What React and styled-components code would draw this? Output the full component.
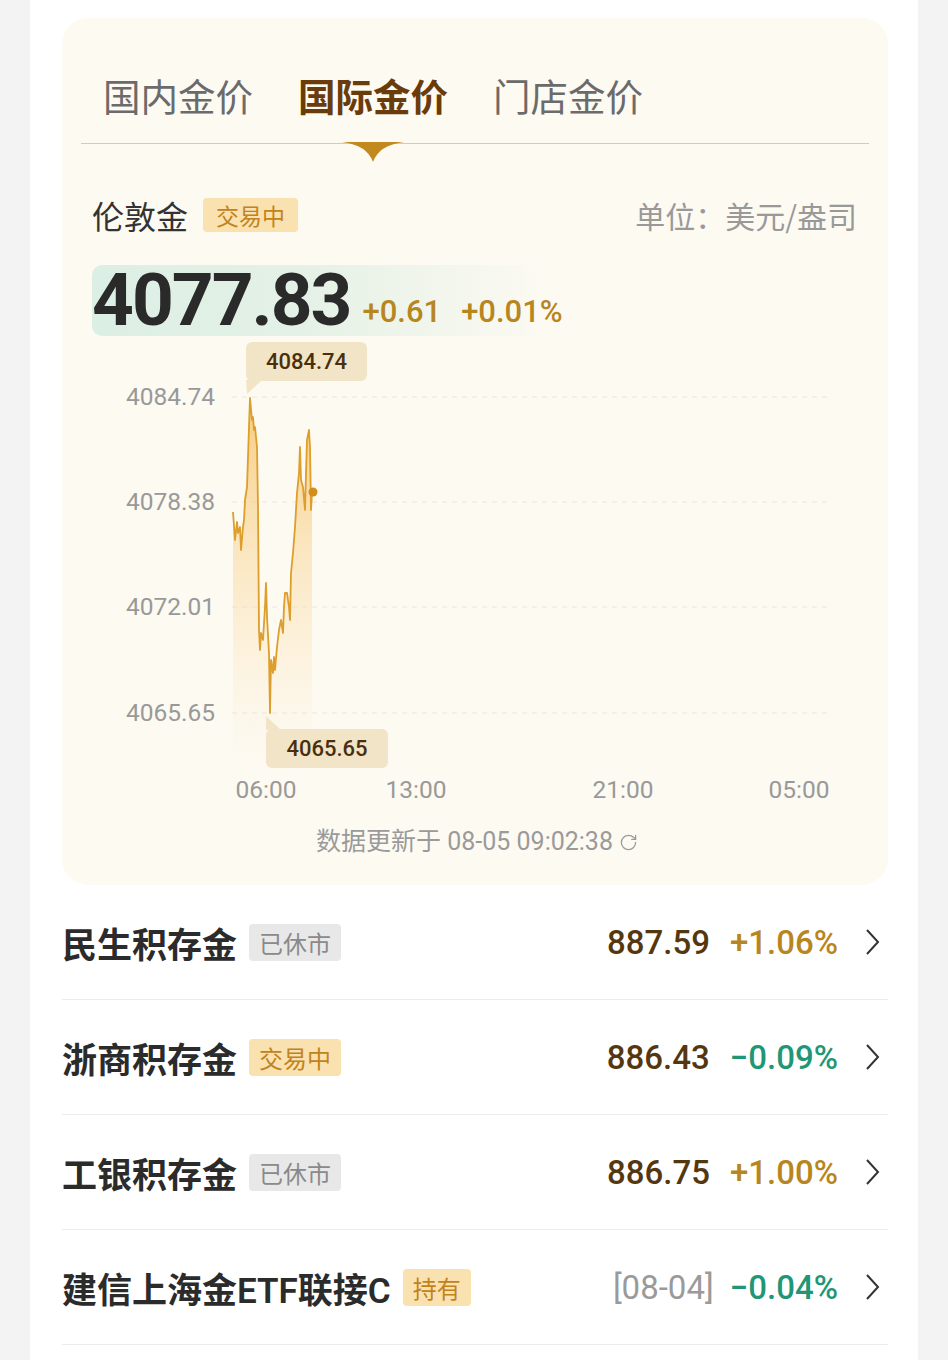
import React from 'react'
import styled, { createGlobalStyle } from 'styled-components'
import { RotateCw } from 'lucide-react'

const GlobalStyle = createGlobalStyle`
  body {
    margin: 0;
    background: #f3f3f3;
    font-family: Roboto, "Noto Sans CJK SC", sans-serif;
  }
`

const tabs = ['国内金价', '国际金价', '门店金价']

const rows = [
  { name: '民生积存金', badge: '已休市', closed: true, price: '887.59', change: '+1.06%', up: true },
  { name: '浙商积存金', badge: '交易中', price: '886.43', change: '−0.09%', up: false },
  { name: '工银积存金', badge: '已休市', closed: true, price: '886.75', change: '+1.00%', up: true },
  { name: '建信上海金ETF联接C', badge: '持有', date: '[08-04]', change: '−0.04%', up: false },
]

// chart points in page coordinates
const points = [
  [233, 512], [235, 540], [237, 522], [238, 533], [240, 527], [241, 550], [243, 527],
  [244, 520], [245, 500], [247, 487], [249, 427], [250, 398], [252, 420], [253, 417],
  [254, 430], [255, 427], [257, 447], [258, 507], [259, 630], [260, 650], [261, 633],
  [263, 640], [265, 607], [266, 583], [267, 617], [269, 653], [270, 713], [271, 660],
  [273, 673], [274, 657], [275, 670], [277, 647], [279, 630], [281, 620], [283, 633],
  [284, 607], [285, 593], [287, 593], [289, 607], [290, 620], [291, 573], [293, 553],
  [295, 527], [297, 493], [299, 473], [300, 447], [301, 480], [303, 487], [305, 510],
  [306, 473], [307, 440], [309, 430], [310, 447], [311, 510], [312, 493],
]

const yTicks = [
  { label: '4084.74', y: 397 },
  { label: '4078.38', y: 502 },
  { label: '4072.01', y: 607 },
  { label: '4065.65', y: 713 },
]

const xTicks = [
  { label: '06:00', x: 266 },
  { label: '13:00', x: 416 },
  { label: '21:00', x: 623 },
  { label: '05:00', x: 799 },
]

const linePath = points.map(([x, y], i) => `${i ? 'L' : 'M'}${x} ${y}`).join(' ')
const areaPath = `${linePath} L312 770 L233 770 Z`

function Chart() {
  return (
    <ChartSvg width="826" height="470" viewBox="62 340 826 470">
      <defs>
        <linearGradient id="area" x1="0" y1="397" x2="0" y2="770" gradientUnits="userSpaceOnUse">
          <stop offset="0" stopColor="#f6c46a" stopOpacity="0.85" />
          <stop offset="1" stopColor="#fbe6c0" stopOpacity="0" />
        </linearGradient>
      </defs>
      {yTicks.map(t => (
        <g key={t.label}>
          <line x1="232" x2="830" y1={t.y} y2={t.y} stroke="#ebe6dc" strokeDasharray="5 5" />
          <text x="215" y={t.y + 8} textAnchor="end" fontSize="24.5" fill="#999">{t.label}</text>
        </g>
      ))}
      {xTicks.map(t => (
        <text key={t.label} x={t.x} y="798" textAnchor="middle" fontSize="24.5" fill="#999">{t.label}</text>
      ))}
      <path d={areaPath} fill="url(#area)" />
      <path d={linePath} fill="none" stroke="#dd9e2c" strokeWidth="1.8" strokeLinejoin="round" />
      <circle cx="313" cy="492" r="4.5" fill="#d48c1a" />

      <path d="M246 380 L262 380 L247 394 Z" fill="#f2e4c6" />
      <rect x="246" y="342" width="121" height="39" rx="6" fill="#f2e4c6" />
      <text x="306.5" y="369" textAnchor="middle" fontSize="22" fontWeight="500" fill="#4a2f0e">4084.74</text>

      <path d="M266 716 L266 730 L281 730 Z" fill="#f2e4c6" />
      <rect x="266" y="729" width="122" height="39" rx="6" fill="#f2e4c6" />
      <text x="327" y="756" textAnchor="middle" fontSize="22" fontWeight="500" fill="#4a2f0e">4065.65</text>
    </ChartSvg>
  )
}

export default function App() {
  return (
    <>
      <GlobalStyle />
      <Page>
        <Card>
          <TabBar>
            {tabs.map((t, i) => (
              <Tab key={t} active={i === 1}>
                {t}
                {i === 1 && (
                  <Indicator width="62" height="20" viewBox="0 0 62 20">
                    <path d="M0 0 H62 Q37 3 31 20 Q25 3 0 0 Z" fill="#c28a1e" />
                  </Indicator>
                )}
              </Tab>
            ))}
          </TabBar>
          <Divider />
          <Header>
            <Name>
              伦敦金
              <Badge>交易中</Badge>
            </Name>
            <Unit>单位：美元/盎司</Unit>
          </Header>
          <PriceRow>
            <BigPrice>4077.83</BigPrice>
            <Delta>+0.61</Delta>
            <Delta>+0.01%</Delta>
          </PriceRow>
          <Chart />
          <Updated>
            数据更新于 08-05 09:02:38
            <RotateCw size={19} strokeWidth={1.6} color="#9a9a9a" />
          </Updated>
        </Card>
        <List>
          {rows.map(r => (
            <Row key={r.name}>
              <RowName>
                {r.name}
                <Badge big closed={r.closed}>{r.badge}</Badge>
              </RowName>
              <RowRight>
                {r.price && <RowPrice>{r.price}</RowPrice>}
                {r.date && <RowDate>{r.date}</RowDate>}
                <RowChange up={r.up}>{r.change}</RowChange>
                <Chevron width="14" height="26" viewBox="0 0 14 26">
                  <polyline points="1,1 12,13 1,25" fill="none" stroke="#333" strokeWidth="2" />
                </Chevron>
              </RowRight>
            </Row>
          ))}
        </List>
      </Page>
    </>
  )
}

const Page = styled.div`
  margin: 0 30px;
  background: #fff;
  min-height: 1360px;
  padding: 18px 30px 0 32px;
  box-sizing: border-box;
`

const Card = styled.div`
  background: #fdfaf2;
  border-radius: 26px;
  padding-bottom: 27px;
  display: flex;
  flex-direction: column;
`

const TabBar = styled.div`
  display: flex;
  gap: 45px;
  padding: 52px 41px 0;
`

const Tab = styled.div`
  position: relative;
  font-size: 37.5px;
  line-height: 50px;
  font-family: "Noto Sans CJK SC", sans-serif;
  color: ${p => (p.active ? '#6a3c0b' : '#6b6b6b')};
  font-weight: ${p => (p.active ? 700 : 400)};
`

const Indicator = styled.svg`
  position: absolute;
  left: 50%;
  top: calc(100% + 22px);
  transform: translateX(-50%);
`

const Divider = styled.div`
  height: 1px;
  margin: 23px 19px 0;
  background: #dccca4;
`

const Header = styled.div`
  display: flex;
  justify-content: space-between;
  align-items: center;
  margin-top: 51px;
  padding: 0 31px 0 30px;
  height: 40px;
`

const Name = styled.div`
  display: flex;
  align-items: center;
  gap: 15px;
  font-size: 32px;
  color: #333;
  font-family: "Noto Sans CJK SC", sans-serif;
`

const Badge = styled.span`
  display: inline-flex;
  align-items: center;
  height: ${p => (p.big ? 37 : 34)}px;
  padding: 0 ${p => (p.big ? 10 : 13)}px;
  border-radius: 4px;
  font-size: ${p => (p.big ? 24 : 23)}px;
  font-weight: 400;
  font-family: "Noto Sans CJK SC", sans-serif;
  background: ${p => (p.closed ? '#e8e8e8' : '#fae1b0')};
  color: ${p => (p.closed ? '#8a8a8a' : '#c2831a')};
`

const Unit = styled.div`
  font-size: 30px;
  color: #999;
  font-family: "Noto Sans CJK SC", sans-serif;
`

const PriceRow = styled.div`
  display: flex;
  align-items: baseline;
  gap: 12px;
  margin: 30px 0 0 30px;
  width: 460px;
  height: 71px;
  border-radius: 10px;
  background: linear-gradient(90deg, #dcefe5 0%, #e4f1e6 45%, rgba(253, 250, 242, 0) 100%);
  box-sizing: border-box;
`

const BigPrice = styled.span`
  font-size: 73px;
  line-height: 71px;
  font-weight: 700;
  letter-spacing: -2px;
  color: #2a2a2a;
`

const Delta = styled.span`
  font-size: 31px;
  font-weight: 500;
  color: #b7861f;
  white-space: nowrap;
  margin-right: 8px;
  position: relative;
  top: -3px;
`

const ChartSvg = styled.svg`
  display: block;
  margin-top: 4px;
  font-family: Roboto, sans-serif;
`

const Updated = styled.div`
  margin-top: 16px;
  display: flex;
  justify-content: center;
  align-items: center;
  gap: 6px;
  font-size: 25px;
  line-height: 32px;
  color: #9a9a9a;
  padding-left: 4px;
`

const List = styled.div`
  display: flex;
  flex-direction: column;
`

const Row = styled.div`
  height: 114px;
  display: flex;
  align-items: center;
  justify-content: space-between;
  border-bottom: 1px solid #ececec;
`

const RowName = styled.div`
  display: flex;
  align-items: center;
  gap: 12px;
  font-size: 35px;
  font-weight: 600;
  color: #2b2b2b;
`

const RowRight = styled.div`
  display: flex;
  align-items: center;
  font-size: 33px;
  font-weight: 500;
  padding-right: 8px;
`

const RowPrice = styled.span`
  color: #55370f;
  margin-right: 20px;
`

const RowDate = styled.span`
  color: #9a9a9a;
  font-weight: 400;
  margin-right: 16px;
`

const RowChange = styled.span`
  color: ${p => (p.up ? '#b8861e' : '#1f9777')};
  margin-right: 28px;
`

const Chevron = styled.svg`
  display: block;
`
